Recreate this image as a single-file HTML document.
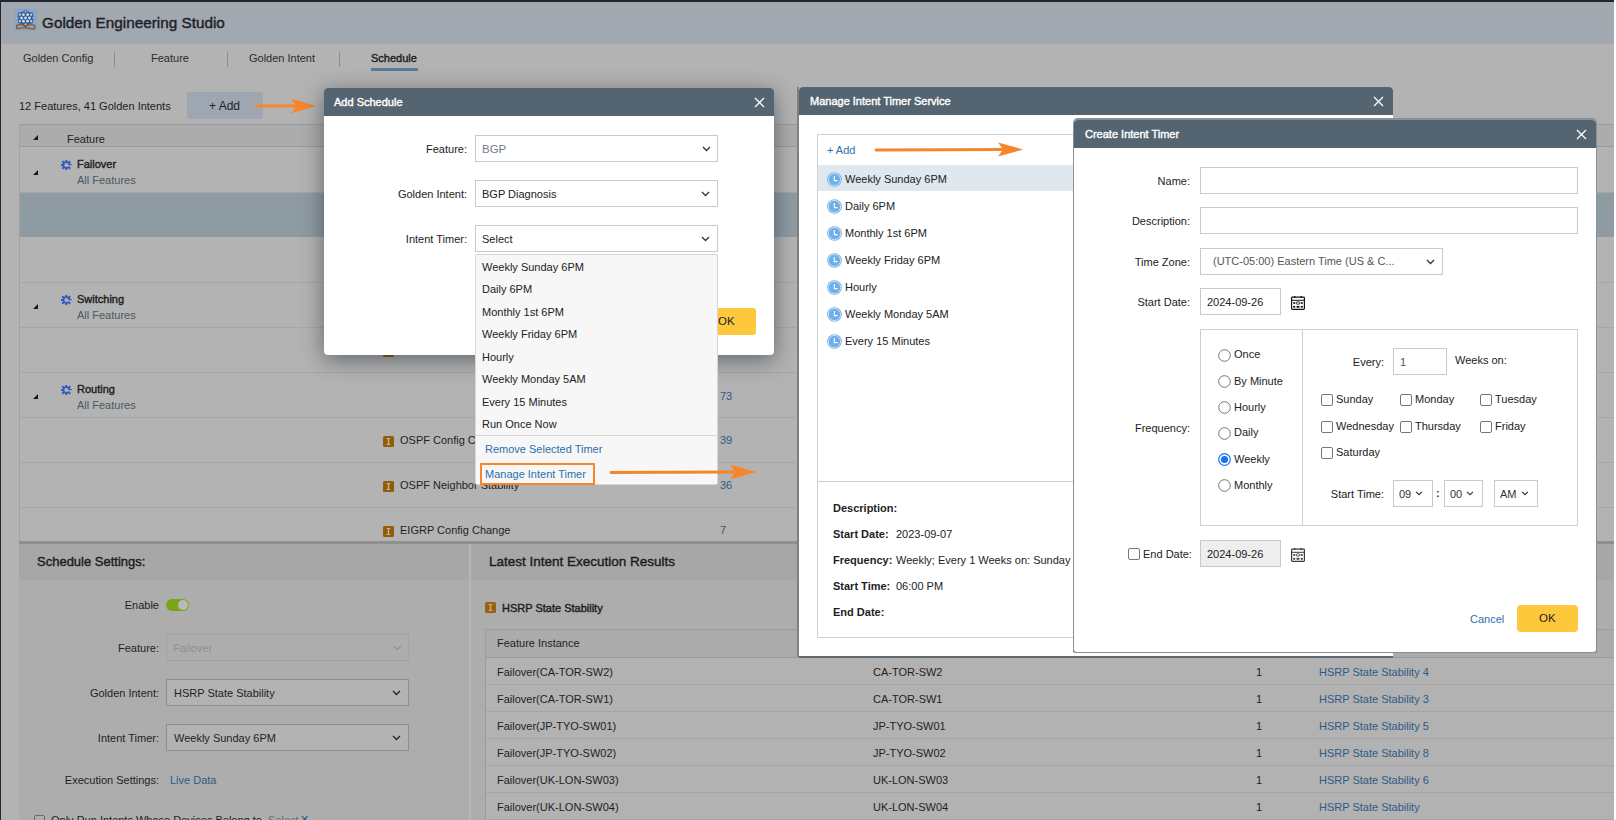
<!DOCTYPE html>
<html><head><meta charset="utf-8">
<style>
*{box-sizing:border-box;margin:0;padding:0}
html,body{width:1616px;height:820px;overflow:hidden;background:#fff}
body{position:relative;font-family:"Liberation Sans",sans-serif;font-size:11px;color:#222}
.a{position:absolute}
.t{position:absolute;white-space:nowrap;line-height:1}
.b{font-weight:bold}
.r{text-align:right}
.chev{position:absolute;width:9px;height:6px}
.sb{-webkit-text-stroke:0.4px currentColor}
</style></head><body>
<!-- page -->
<div class="a" style="left:0;top:0;width:1614px;height:820px;background:#b3b3b3;overflow:hidden">
  <div class="a" style="left:0;top:0;width:1614px;height:2px;background:#23272c"></div>
  <div class="a" style="left:0;top:0;width:1px;height:820px;background:#23272c"></div>
  <!-- header -->
  <div class="a" style="left:1px;top:2px;width:1613px;height:42px;background:#a1a8b0"></div>
  <svg class="a" style="left:15px;top:9px" width="22" height="22" viewBox="0 0 22 22">
    <rect x="0" y="0" width="22" height="22" rx="1.5" fill="#89a5c8"/>
    <polygon points="10.5,0.8 14,3.2 17.8,3.6 18.4,7.4 17,9 18.4,10.6 17.8,14.2 14,15 10.5,17.2 7,15 3.2,14.2 2.6,10.6 4,9 2.6,7.4 3.2,3.6 7,3.2" fill="#2462a8"/>
    <g fill="#ddd6cc">
      <circle cx="10.5" cy="2.6" r="0.9"/><circle cx="10.5" cy="15.2" r="0.9"/>
      <circle cx="4.8" cy="5.7" r="1.1"/><circle cx="8.4" cy="5.7" r="1.4"/><circle cx="12.6" cy="5.7" r="1.4"/><circle cx="16.2" cy="5.7" r="1.1"/>
      <circle cx="6.5" cy="9" r="1.4"/><circle cx="10.5" cy="9" r="1.4"/><circle cx="14.5" cy="9" r="1.4"/>
      <circle cx="4.8" cy="12.2" r="1.1"/><circle cx="8.4" cy="12.2" r="1.4"/><circle cx="12.6" cy="12.2" r="1.4"/><circle cx="16.2" cy="12.2" r="1.1"/>
    </g>
    <path d="M10.5 17.8 C8 15.5 4 15.5 1.8 16.2 L1.6 19.6 C4.5 19 8 19.2 10.5 18.6 C13 19.2 16.5 19.8 19.6 19.8 L19.8 16.5 C17 15.3 13 15.5 10.5 17.8 Z" fill="none" stroke="#9a5412" stroke-width="1.3" stroke-linejoin="round"/>
  </svg>
  <div class="t sb" style="left:42px;top:15px;font-size:15.3px;color:#1d2126">Golden Engineering Studio</div>
  <!-- tabs -->
  <div class="t" style="left:23px;top:53px;color:#2b2b2b">Golden Config</div>
  <div class="a" style="left:114px;top:52px;width:1px;height:15px;background:#8c8c8c"></div>
  <div class="t" style="left:151px;top:53px;color:#2b2b2b">Feature</div>
  <div class="a" style="left:227px;top:52px;width:1px;height:15px;background:#8c8c8c"></div>
  <div class="t" style="left:249px;top:53px;color:#2b2b2b">Golden Intent</div>
  <div class="a" style="left:339px;top:52px;width:1px;height:15px;background:#8c8c8c"></div>
  <div class="t sb" style="left:371px;top:53px;color:#1d1d1d">Schedule</div>
  <div class="a" style="left:371px;top:68px;width:47px;height:3px;background:#5b7b95"></div>
  <!-- toolbar -->
  <div class="t" style="left:19px;top:101px;color:#222">12 Features, 41 Golden Intents</div>
  <div class="a" style="left:187px;top:92px;width:76px;height:27px;background:#9ea6b1;border-radius:3px"></div>
  <div class="t" style="left:209px;top:100px;color:#222;font-size:12px">+ Add</div>

  <!-- table -->
  <div class="a" style="left:19px;top:124px;width:1595px;height:418px;border-left:1px solid #a0a0a0;border-top:1px solid #9c9c9c"></div>
  <div class="a" style="left:20px;top:125px;width:1594px;height:22px;background:#acacac;border-bottom:1px solid #999"></div>
  <div class="a" style="left:33px;top:135px;width:0;height:0;border-left:5px solid transparent;border-bottom:5px solid #1a1a1a"></div>
  <div class="t" style="left:67px;top:134px;color:#222">Feature</div>
  <!-- rows -->
  <div class="a" style="left:20px;top:192px;width:1594px;height:45px;background:#8f9ba2"></div>
  <div class="a" style="left:20px;top:192px;width:1594px;height:1px;background:#a6a6a6"></div>
  <div class="a" style="left:20px;top:282px;width:1594px;height:1px;background:#a6a6a6"></div>
  <div class="a" style="left:20px;top:327px;width:1594px;height:1px;background:#a6a6a6"></div>
  <div class="a" style="left:20px;top:372px;width:1594px;height:1px;background:#a6a6a6"></div>
  <div class="a" style="left:20px;top:417px;width:1594px;height:1px;background:#a6a6a6"></div>
  <div class="a" style="left:20px;top:462px;width:1594px;height:1px;background:#a6a6a6"></div>
  <div class="a" style="left:20px;top:507px;width:1594px;height:1px;background:#a6a6a6"></div>
  <div class="a" style="left:19px;top:541px;width:1595px;height:3px;background:#8f8f8f"></div>

  <!-- group rows -->
  <div class="a" style="left:33px;top:170px;width:0;height:0;border-left:5px solid transparent;border-bottom:5px solid #1a1a1a"></div>
  <svg class="a" style="left:61px;top:160px" width="11" height="10" viewBox="0 0 11 10"><g fill="none" stroke="#2f5cc0"><circle cx="5.3" cy="5" r="2.9" stroke-width="1.8"/></g><g fill="#2f5cc0"><rect x="4.2" y="0" width="2" height="2"/><rect x="4.2" y="8" width="2" height="2"/><rect x="0" y="4" width="2" height="2"/><rect x="8.5" y="4" width="2.3" height="2"/><rect x="1" y="1" width="2" height="2" transform="rotate(45 2 2)"/><rect x="7.5" y="1" width="2" height="2" transform="rotate(45 8.5 2)"/><rect x="1" y="7" width="2" height="2" transform="rotate(45 2 8)"/><rect x="7.5" y="7" width="2" height="2" transform="rotate(45 8.5 8)"/></g><rect x="6.5" y="5.2" width="4.5" height="1.3" fill="#b3b3b3"/></svg>
  <div class="t sb" style="left:77px;top:159px;color:#1e1e1e">Failover</div>
  <div class="t" style="left:77px;top:175px;color:#4c5863">All Features</div>

  <div class="a" style="left:33px;top:304px;width:0;height:0;border-left:5px solid transparent;border-bottom:5px solid #1a1a1a"></div>
  <svg class="a" style="left:61px;top:295px" width="11" height="10" viewBox="0 0 11 10"><g fill="none" stroke="#2f5cc0"><circle cx="5.3" cy="5" r="2.9" stroke-width="1.8"/></g><g fill="#2f5cc0"><rect x="4.2" y="0" width="2" height="2"/><rect x="4.2" y="8" width="2" height="2"/><rect x="0" y="4" width="2" height="2"/><rect x="8.5" y="4" width="2.3" height="2"/><rect x="1" y="1" width="2" height="2" transform="rotate(45 2 2)"/><rect x="7.5" y="1" width="2" height="2" transform="rotate(45 8.5 2)"/><rect x="1" y="7" width="2" height="2" transform="rotate(45 2 8)"/><rect x="7.5" y="7" width="2" height="2" transform="rotate(45 8.5 8)"/></g><rect x="6.5" y="5.2" width="4.5" height="1.3" fill="#b3b3b3"/></svg>
  <div class="t sb" style="left:77px;top:294px;color:#1e1e1e">Switching</div>
  <div class="t" style="left:77px;top:310px;color:#4c5863">All Features</div>

  <div class="a" style="left:33px;top:394px;width:0;height:0;border-left:5px solid transparent;border-bottom:5px solid #1a1a1a"></div>
  <svg class="a" style="left:61px;top:385px" width="11" height="10" viewBox="0 0 11 10"><g fill="none" stroke="#2f5cc0"><circle cx="5.3" cy="5" r="2.9" stroke-width="1.8"/></g><g fill="#2f5cc0"><rect x="4.2" y="0" width="2" height="2"/><rect x="4.2" y="8" width="2" height="2"/><rect x="0" y="4" width="2" height="2"/><rect x="8.5" y="4" width="2.3" height="2"/><rect x="1" y="1" width="2" height="2" transform="rotate(45 2 2)"/><rect x="7.5" y="1" width="2" height="2" transform="rotate(45 8.5 2)"/><rect x="1" y="7" width="2" height="2" transform="rotate(45 2 8)"/><rect x="7.5" y="7" width="2" height="2" transform="rotate(45 8.5 8)"/></g><rect x="6.5" y="5.2" width="4.5" height="1.3" fill="#b3b3b3"/></svg>
  <div class="t sb" style="left:77px;top:384px;color:#1e1e1e">Routing</div>
  <div class="t" style="left:77px;top:400px;color:#4c5863">All Features</div>

  <!-- intent rows -->
  <svg class="a" style="left:383px;top:346px" width="11" height="11" viewBox="0 0 11 11"><rect width="11" height="11" rx="1.5" fill="#935d08"/><path d="M3.7 2 H7.3 V3 H6.2 V8 H7.3 V9 H3.7 V8 H4.8 V3 H3.7 Z" fill="#b4b4b4"/></svg>
  <svg class="a" style="left:383px;top:436px" width="11" height="11" viewBox="0 0 11 11"><rect width="11" height="11" rx="1.5" fill="#935d08"/><path d="M3.7 2 H7.3 V3 H6.2 V8 H7.3 V9 H3.7 V8 H4.8 V3 H3.7 Z" fill="#b4b4b4"/></svg>
  <div class="t" style="left:400px;top:435px;color:#1f1f1f">OSPF Config Change</div>
  <div class="t" style="left:720px;top:391px;color:#2f5a84">73</div>
  <div class="t" style="left:720px;top:435px;color:#2f5a84">39</div>
  <svg class="a" style="left:383px;top:481px" width="11" height="11" viewBox="0 0 11 11"><rect width="11" height="11" rx="1.5" fill="#935d08"/><path d="M3.7 2 H7.3 V3 H6.2 V8 H7.3 V9 H3.7 V8 H4.8 V3 H3.7 Z" fill="#b4b4b4"/></svg>
  <div class="t" style="left:400px;top:480px;color:#1f1f1f">OSPF Neighbor Stability</div>
  <div class="t" style="left:720px;top:480px;color:#2f5a84">36</div>
  <svg class="a" style="left:383px;top:526px" width="11" height="11" viewBox="0 0 11 11"><rect width="11" height="11" rx="1.5" fill="#935d08"/><path d="M3.7 2 H7.3 V3 H6.2 V8 H7.3 V9 H3.7 V8 H4.8 V3 H3.7 Z" fill="#b4b4b4"/></svg>
  <div class="t" style="left:400px;top:525px;color:#1f1f1f">EIGRP Config Change</div>
  <div class="t" style="left:720px;top:525px;color:#2f5a84">7</div>

  <!-- bottom panels -->
  <div class="a" style="left:19px;top:544px;width:450px;height:276px;background:#adadad"></div>
  <div class="a" style="left:19px;top:544px;width:450px;height:36px;background:#a7a7a7"></div>
  <div class="a" style="left:469px;top:544px;width:2px;height:276px;background:#b6b6b6"></div>
  <div class="a" style="left:471px;top:544px;width:1143px;height:276px;background:#adadad"></div>
  <div class="a" style="left:471px;top:544px;width:1143px;height:36px;background:#a7a7a7"></div>
  <div class="t sb" style="left:37px;top:555px;font-size:13px;color:#1c1c1c">Schedule Settings:</div>
  <div class="t r" style="left:59px;width:100px;top:600px;color:#1f1f1f">Enable</div>
  <div class="a" style="left:166px;top:599px;width:23px;height:12px;border-radius:6px;background:#79a51c"></div>
  <div class="a" style="left:178px;top:600px;width:10px;height:10px;border-radius:5px;background:#b9b9b9"></div>
  <div class="t r" style="left:59px;width:100px;top:643px;color:#1f1f1f">Feature:</div>
  <div class="a" style="left:166px;top:634px;width:243px;height:27px;border:1px solid #a3a3a3;background:#adadad"></div>
  <div class="t" style="left:173px;top:643px;color:#8f8f8f">Failover</div>
  <svg class="chev" style="left:393px;top:645px" viewBox="0 0 9 6"><path d="M1 1 L4.5 4.5 L8 1" fill="none" stroke="#8f8f8f" stroke-width="1.2"/></svg>
  <div class="t r" style="left:39px;width:120px;top:688px;color:#1f1f1f">Golden Intent:</div>
  <div class="a" style="left:166px;top:679px;width:243px;height:27px;border:1px solid #8e8e8e;background:#b3b3b3"></div>
  <div class="t" style="left:174px;top:688px;color:#1f1f1f">HSRP State Stability</div>
  <svg class="chev" style="left:392px;top:690px" viewBox="0 0 9 6"><path d="M1 1 L4.5 4.5 L8 1" fill="none" stroke="#222" stroke-width="1.3"/></svg>
  <div class="t r" style="left:39px;width:120px;top:733px;color:#1f1f1f">Intent Timer:</div>
  <div class="a" style="left:166px;top:724px;width:243px;height:27px;border:1px solid #8e8e8e;background:#b3b3b3"></div>
  <div class="t" style="left:174px;top:733px;color:#1f1f1f">Weekly Sunday 6PM</div>
  <svg class="chev" style="left:392px;top:735px" viewBox="0 0 9 6"><path d="M1 1 L4.5 4.5 L8 1" fill="none" stroke="#222" stroke-width="1.3"/></svg>
  <div class="t r" style="left:19px;width:140px;top:775px;color:#1f1f1f">Execution Settings:</div>
  <div class="t" style="left:170px;top:775px;color:#2f5a84">Live Data</div>
  <div class="a" style="left:34px;top:815px;width:11px;height:11px;border:1px solid #6a6a6a;border-radius:2px"></div>
  <div class="t" style="left:51px;top:815px;color:#1f1f1f">Only Run Intents Whose Devices Belong to</div>
  <div class="t" style="left:268px;top:815px;color:#6c6c6c">Select</div>
  <div class="t" style="left:300px;top:814px;color:#2f5a84">&#x2715;</div>

  <!-- results -->
  <svg class="a" style="left:485px;top:602px" width="11" height="11" viewBox="0 0 11 11"><rect width="11" height="11" rx="1.5" fill="#9a620a"/><path d="M3.7 2 H7.3 V3 H6.2 V8 H7.3 V9 H3.7 V8 H4.8 V3 H3.7 Z" fill="#b0b0b0"/></svg>
  <div class="t sb" style="left:502px;top:603px;color:#1c1c1c">HSRP State Stability</div>
  <div class="a" style="left:485px;top:629px;width:1129px;height:191px;border-left:1px solid #9c9c9c;border-top:1px solid #9c9c9c;background:#b2b2b2"></div>
  <div class="a" style="left:486px;top:630px;width:1128px;height:28px;background:#ababab;border-bottom:1px solid #9c9c9c"></div>
  <div class="t" style="left:497px;top:638px;color:#1f1f1f">Feature Instance</div>
  <div class="a" style="left:486px;top:684px;width:1128px;height:1px;background:#a4a4a4"></div>
  <div class="t" style="left:497px;top:667px;color:#1f1f1f">Failover(CA-TOR-SW2)</div>
  <div class="t" style="left:873px;top:667px;color:#1f1f1f">CA-TOR-SW2</div>
  <div class="t" style="left:1256px;top:667px;color:#1f1f1f">1</div>
  <div class="t" style="left:1319px;top:667px;color:#2f5a84">HSRP State Stability 4</div>
  <div class="a" style="left:486px;top:711px;width:1128px;height:1px;background:#a4a4a4"></div>
  <div class="t" style="left:497px;top:694px;color:#1f1f1f">Failover(CA-TOR-SW1)</div>
  <div class="t" style="left:873px;top:694px;color:#1f1f1f">CA-TOR-SW1</div>
  <div class="t" style="left:1256px;top:694px;color:#1f1f1f">1</div>
  <div class="t" style="left:1319px;top:694px;color:#2f5a84">HSRP State Stability 3</div>
  <div class="a" style="left:486px;top:738px;width:1128px;height:1px;background:#a4a4a4"></div>
  <div class="t" style="left:497px;top:721px;color:#1f1f1f">Failover(JP-TYO-SW01)</div>
  <div class="t" style="left:873px;top:721px;color:#1f1f1f">JP-TYO-SW01</div>
  <div class="t" style="left:1256px;top:721px;color:#1f1f1f">1</div>
  <div class="t" style="left:1319px;top:721px;color:#2f5a84">HSRP State Stability 5</div>
  <div class="a" style="left:486px;top:765px;width:1128px;height:1px;background:#a4a4a4"></div>
  <div class="t" style="left:497px;top:748px;color:#1f1f1f">Failover(JP-TYO-SW02)</div>
  <div class="t" style="left:873px;top:748px;color:#1f1f1f">JP-TYO-SW02</div>
  <div class="t" style="left:1256px;top:748px;color:#1f1f1f">1</div>
  <div class="t" style="left:1319px;top:748px;color:#2f5a84">HSRP State Stability 8</div>
  <div class="a" style="left:486px;top:792px;width:1128px;height:1px;background:#a4a4a4"></div>
  <div class="t" style="left:497px;top:775px;color:#1f1f1f">Failover(UK-LON-SW03)</div>
  <div class="t" style="left:873px;top:775px;color:#1f1f1f">UK-LON-SW03</div>
  <div class="t" style="left:1256px;top:775px;color:#1f1f1f">1</div>
  <div class="t" style="left:1319px;top:775px;color:#2f5a84">HSRP State Stability 6</div>
  <div class="a" style="left:486px;top:819px;width:1128px;height:1px;background:#a4a4a4"></div>
  <div class="t" style="left:497px;top:802px;color:#1f1f1f">Failover(UK-LON-SW04)</div>
  <div class="t" style="left:873px;top:802px;color:#1f1f1f">UK-LON-SW04</div>
  <div class="t" style="left:1256px;top:802px;color:#1f1f1f">1</div>
  <div class="t" style="left:1319px;top:802px;color:#2f5a84">HSRP State Stability</div>
  <div class="t sb" style="left:489px;top:555px;font-size:13.5px;color:#1c1c1c">Latest Intent Execution Results</div>
</div>
<!-- MODALS -->
<!-- orange arrow 1 -->
<svg class="a" style="left:255px;top:97px" width="62" height="18" viewBox="0 0 62 18"><path d="M1 9 L40 9" stroke="#f7862b" stroke-width="3" stroke-linecap="round"/><path d="M36 1.5 L61 9 L36 16.5 L41 9 Z" fill="#f7862b"/></svg>

<!-- Add Schedule modal -->
<div class="a" style="left:324px;top:88px;width:450px;height:267px;background:#fff;border-radius:4px;box-shadow:0 5px 22px rgba(15,25,35,0.5)"></div>
<div class="a" style="left:324px;top:88px;width:450px;height:28px;background:#546471;border-radius:4px 4px 0 0"></div>
<div class="t sb" style="left:334px;top:97px;color:#fff">Add Schedule</div>
<svg class="a" style="left:754px;top:97px" width="11" height="11" viewBox="0 0 11 11"><path d="M1 1 L10 10 M10 1 L1 10" stroke="#fff" stroke-width="1.3"/></svg>
<div class="t r" style="left:367px;width:100px;top:144px;color:#222">Feature:</div>
<div class="a" style="left:475px;top:135px;width:243px;height:27px;border:1px solid #c9c9c9;background:#fff"></div>
<div class="t" style="left:482px;top:144px;color:#6f7d89;font-size:11.5px">BGP</div>
<svg class="chev" style="left:702px;top:146px" viewBox="0 0 9 6"><path d="M1 1 L4.5 4.5 L8 1" fill="none" stroke="#333" stroke-width="1.3"/></svg>
<div class="t r" style="left:347px;width:120px;top:189px;color:#222">Golden Intent:</div>
<div class="a" style="left:475px;top:180px;width:243px;height:27px;border:1px solid #c9c9c9;background:#fff"></div>
<div class="t" style="left:482px;top:189px;color:#222">BGP Diagnosis</div>
<svg class="chev" style="left:701px;top:191px" viewBox="0 0 9 6"><path d="M1 1 L4.5 4.5 L8 1" fill="none" stroke="#333" stroke-width="1.3"/></svg>
<div class="t r" style="left:347px;width:120px;top:234px;color:#222">Intent Timer:</div>
<div class="a" style="left:475px;top:225px;width:243px;height:27px;border:1px solid #c9c9c9;background:#fff"></div>
<div class="t" style="left:482px;top:234px;color:#222">Select</div>
<svg class="chev" style="left:701px;top:236px" viewBox="0 0 9 6"><path d="M1 1 L4.5 4.5 L8 1" fill="none" stroke="#333" stroke-width="1.3"/></svg>
<div class="a" style="left:697px;top:308px;width:59px;height:27px;background:#fec83c;border-radius:3px"></div>
<div class="t" style="left:718px;top:316px;color:#222;font-size:11.5px">OK</div>
<!-- dropdown -->
<div class="a" style="left:475px;top:254px;width:243px;height:231px;background:#f7f7f7;border:1px solid #d6d6d6;border-radius:2px"></div>
<div class="t" style="left:482px;top:262px;color:#222">Weekly Sunday 6PM</div>
<div class="t" style="left:482px;top:284px;color:#222">Daily 6PM</div>
<div class="t" style="left:482px;top:307px;color:#222">Monthly 1st 6PM</div>
<div class="t" style="left:482px;top:329px;color:#222">Weekly Friday 6PM</div>
<div class="t" style="left:482px;top:352px;color:#222">Hourly</div>
<div class="t" style="left:482px;top:374px;color:#222">Weekly Monday 5AM</div>
<div class="t" style="left:482px;top:397px;color:#222">Every 15 Minutes</div>
<div class="t" style="left:482px;top:419px;color:#222">Run Once Now</div>
<div class="a" style="left:476px;top:435px;width:241px;height:1px;background:#d6d6d6"></div>
<div class="t" style="left:485px;top:444px;color:#2c6fad">Remove Selected Timer</div>
<div class="t" style="left:485px;top:469px;color:#2c6fad">Manage Intent Timer</div>
<div class="a" style="left:480px;top:463px;width:115px;height:22px;border:2px solid #f7862b"></div>
<svg class="a" style="left:609px;top:463px" width="148" height="18" viewBox="0 0 148 18"><path d="M2 9.5 L125 9" stroke="#f7862b" stroke-width="3" stroke-linecap="round"/><path d="M121 1.5 L147 9 L121 16.5 L126 9 Z" fill="#f7862b"/></svg>

<!-- Manage modal -->
<div class="a" style="left:797px;top:87px;width:2px;height:570px;background:#7f7f7f"></div>
<div class="a" style="left:799px;top:87px;width:594px;height:570px;background:#fff;border-radius:4px 4px 0 0"></div>
<div class="a" style="left:799px;top:656px;width:594px;height:2px;background:#5f6a72"></div>
<div class="a" style="left:799px;top:87px;width:594px;height:28px;background:#546471;border-radius:4px 4px 0 0"></div>
<div class="t sb" style="left:810px;top:96px;color:#fff">Manage Intent Timer Service</div>
<svg class="a" style="left:1373px;top:96px" width="11" height="11" viewBox="0 0 11 11"><path d="M1 1 L10 10 M10 1 L1 10" stroke="#fff" stroke-width="1.3"/></svg>
<div class="a" style="left:817px;top:134px;width:560px;height:504px;border:1px solid #cfcfcf"></div>
<div class="a" style="left:818px;top:481px;width:558px;height:1px;background:#cfcfcf"></div>
<div class="t" style="left:827px;top:145px;color:#2c6fad">+ Add</div>
<svg class="a" style="left:874px;top:141px" width="150" height="18" viewBox="0 0 150 18"><path d="M2 9 L128 8.5" stroke="#f7862b" stroke-width="3" stroke-linecap="round"/><path d="M124 1.5 L149 8.5 L124 15.5 L129 8.5 Z" fill="#f7862b"/></svg>
<div class="a" style="left:818px;top:165px;width:558px;height:26px;background:#dfe8ef"></div>
<svg class="a" style="left:827px;top:172px" width="15" height="15" viewBox="0 0 15 15"><circle cx="7.5" cy="7.5" r="7.3" fill="#6eaee8"/><circle cx="7.5" cy="7.5" r="6.1" fill="none" stroke="#e3f0fb" stroke-width="0.8"/><path d="M7.3 4 V8.6 H10.6" fill="none" stroke="#fff" stroke-width="1.1"/></svg>
<div class="t" style="left:845px;top:174px;color:#222">Weekly Sunday 6PM</div>
<svg class="a" style="left:827px;top:199px" width="15" height="15" viewBox="0 0 15 15"><circle cx="7.5" cy="7.5" r="7.3" fill="#6eaee8"/><circle cx="7.5" cy="7.5" r="6.1" fill="none" stroke="#e3f0fb" stroke-width="0.8"/><path d="M7.3 4 V8.6 H10.6" fill="none" stroke="#fff" stroke-width="1.1"/></svg>
<div class="t" style="left:845px;top:201px;color:#222">Daily 6PM</div>
<svg class="a" style="left:827px;top:226px" width="15" height="15" viewBox="0 0 15 15"><circle cx="7.5" cy="7.5" r="7.3" fill="#6eaee8"/><circle cx="7.5" cy="7.5" r="6.1" fill="none" stroke="#e3f0fb" stroke-width="0.8"/><path d="M7.3 4 V8.6 H10.6" fill="none" stroke="#fff" stroke-width="1.1"/></svg>
<div class="t" style="left:845px;top:228px;color:#222">Monthly 1st 6PM</div>
<svg class="a" style="left:827px;top:253px" width="15" height="15" viewBox="0 0 15 15"><circle cx="7.5" cy="7.5" r="7.3" fill="#6eaee8"/><circle cx="7.5" cy="7.5" r="6.1" fill="none" stroke="#e3f0fb" stroke-width="0.8"/><path d="M7.3 4 V8.6 H10.6" fill="none" stroke="#fff" stroke-width="1.1"/></svg>
<div class="t" style="left:845px;top:255px;color:#222">Weekly Friday 6PM</div>
<svg class="a" style="left:827px;top:280px" width="15" height="15" viewBox="0 0 15 15"><circle cx="7.5" cy="7.5" r="7.3" fill="#6eaee8"/><circle cx="7.5" cy="7.5" r="6.1" fill="none" stroke="#e3f0fb" stroke-width="0.8"/><path d="M7.3 4 V8.6 H10.6" fill="none" stroke="#fff" stroke-width="1.1"/></svg>
<div class="t" style="left:845px;top:282px;color:#222">Hourly</div>
<svg class="a" style="left:827px;top:307px" width="15" height="15" viewBox="0 0 15 15"><circle cx="7.5" cy="7.5" r="7.3" fill="#6eaee8"/><circle cx="7.5" cy="7.5" r="6.1" fill="none" stroke="#e3f0fb" stroke-width="0.8"/><path d="M7.3 4 V8.6 H10.6" fill="none" stroke="#fff" stroke-width="1.1"/></svg>
<div class="t" style="left:845px;top:309px;color:#222">Weekly Monday 5AM</div>
<svg class="a" style="left:827px;top:334px" width="15" height="15" viewBox="0 0 15 15"><circle cx="7.5" cy="7.5" r="7.3" fill="#6eaee8"/><circle cx="7.5" cy="7.5" r="6.1" fill="none" stroke="#e3f0fb" stroke-width="0.8"/><path d="M7.3 4 V8.6 H10.6" fill="none" stroke="#fff" stroke-width="1.1"/></svg>
<div class="t" style="left:845px;top:336px;color:#222">Every 15 Minutes</div>
<div class="t b" style="left:833px;top:503px;color:#1e1e1e">Description:</div>
<div class="t b" style="left:833px;top:529px;color:#1e1e1e">Start Date:</div>
<div class="t" style="left:896px;top:529px;color:#222">2023-09-07</div>
<div class="t b" style="left:833px;top:555px;color:#1e1e1e">Frequency:</div>
<div class="t" style="left:896px;top:555px;color:#222">Weekly; Every 1 Weeks on: Sunday</div>
<div class="t b" style="left:833px;top:581px;color:#1e1e1e">Start Time:</div>
<div class="t" style="left:896px;top:581px;color:#222">06:00 PM</div>
<div class="t b" style="left:833px;top:607px;color:#1e1e1e">End Date:</div>

<!-- Create modal -->
<div class="a" style="left:1073px;top:118px;width:524px;height:535px;background:#86919a;border-radius:5px 5px 2px 2px"></div>
<div class="a" style="left:1074px;top:120px;width:522px;height:532px;background:#fff;border-radius:4px 4px 3px 3px"></div>
<div class="a" style="left:1074px;top:120px;width:522px;height:28px;background:#546471;border-radius:4px 4px 0 0"></div>
<div class="t sb" style="left:1085px;top:129px;color:#fff">Create Intent Timer</div>
<svg class="a" style="left:1576px;top:129px" width="11" height="11" viewBox="0 0 11 11"><path d="M1 1 L10 10 M10 1 L1 10" stroke="#fff" stroke-width="1.3"/></svg>

<div class="t r" style="left:1070px;width:120px;top:176px;color:#222">Name:</div>
<div class="a" style="left:1200px;top:167px;width:378px;height:27px;border:1px solid #c9c9c9"></div>
<div class="t r" style="left:1070px;width:120px;top:216px;color:#222">Description:</div>
<div class="a" style="left:1200px;top:207px;width:378px;height:27px;border:1px solid #c9c9c9"></div>
<div class="t r" style="left:1070px;width:120px;top:257px;color:#222">Time Zone:</div>
<div class="a" style="left:1200px;top:248px;width:243px;height:27px;border:1px solid #c9c9c9"></div>
<div class="t" style="left:1213px;top:256px;color:#555">(UTC-05:00) Eastern Time (US &amp; C...</div>
<svg class="chev" style="left:1426px;top:259px" viewBox="0 0 9 6"><path d="M1 1 L4.5 4.5 L8 1" fill="none" stroke="#333" stroke-width="1.3"/></svg>
<div class="t r" style="left:1070px;width:120px;top:297px;color:#222">Start Date:</div>
<div class="a" style="left:1200px;top:288px;width:81px;height:27px;border:1px solid #c9c9c9"></div>
<div class="t" style="left:1207px;top:297px;color:#222">2024-09-26</div>
<svg class="a cal" style="left:1291px;top:296px" width="14" height="14" viewBox="0 0 14 14"><rect x="0.6" y="1.2" width="12.8" height="12.2" rx="0.8" fill="none" stroke="#151515" stroke-width="1.2"/><path d="M0.6 4.3 H13.4" stroke="#151515" stroke-width="1"/><circle cx="3.8" cy="0.9" r="0.9" fill="#151515"/><circle cx="10.2" cy="0.9" r="0.9" fill="#151515"/><g fill="#151515"><rect x="2.2" y="6.2" width="2" height="1.6"/><rect x="9.8" y="6.2" width="2" height="1.6"/><rect x="2.2" y="9.9" width="2" height="1.8"/><rect x="5.5" y="9.9" width="3" height="1.8"/><rect x="9.8" y="9.9" width="2" height="1.8"/></g><rect x="5.2" y="5.9" width="3.6" height="2.2" rx="1" fill="none" stroke="#151515" stroke-width="0.9"/></svg>

<div class="t r" style="left:1070px;width:120px;top:423px;color:#222">Frequency:</div>
<div class="a" style="left:1200px;top:329px;width:378px;height:197px;border:1px solid #cfcfcf"></div>
<div class="a" style="left:1302px;top:330px;width:1px;height:195px;background:#cfcfcf"></div>
<svg class="a" style="left:1218px;top:349px" width="13" height="13" viewBox="0 0 13 13"><circle cx="6.5" cy="6.5" r="5.8" fill="#fff" stroke="#767676" stroke-width="1"/></svg>
<div class="t" style="left:1234px;top:349px;color:#222">Once</div>
<svg class="a" style="left:1218px;top:375px" width="13" height="13" viewBox="0 0 13 13"><circle cx="6.5" cy="6.5" r="5.8" fill="#fff" stroke="#767676" stroke-width="1"/></svg>
<div class="t" style="left:1234px;top:376px;color:#222">By Minute</div>
<svg class="a" style="left:1218px;top:401px" width="13" height="13" viewBox="0 0 13 13"><circle cx="6.5" cy="6.5" r="5.8" fill="#fff" stroke="#767676" stroke-width="1"/></svg>
<div class="t" style="left:1234px;top:402px;color:#222">Hourly</div>
<svg class="a" style="left:1218px;top:427px" width="13" height="13" viewBox="0 0 13 13"><circle cx="6.5" cy="6.5" r="5.8" fill="#fff" stroke="#767676" stroke-width="1"/></svg>
<div class="t" style="left:1234px;top:427px;color:#222">Daily</div>
<svg class="a" style="left:1218px;top:453px" width="13" height="13" viewBox="0 0 13 13"><circle cx="6.5" cy="6.5" r="5.8" fill="#fff" stroke="#1a73e8" stroke-width="1.2"/><circle cx="6.5" cy="6.5" r="3.6" fill="#1a73e8"/></svg>
<div class="t" style="left:1234px;top:454px;color:#222">Weekly</div>
<svg class="a" style="left:1218px;top:479px" width="13" height="13" viewBox="0 0 13 13"><circle cx="6.5" cy="6.5" r="5.8" fill="#fff" stroke="#767676" stroke-width="1"/></svg>
<div class="t" style="left:1234px;top:480px;color:#222">Monthly</div>
<div class="t r" style="left:1304px;width:80px;top:357px;color:#222">Every:</div>
<div class="a" style="left:1393px;top:348px;width:54px;height:27px;border:1px solid #c9c9c9"></div>
<div class="t" style="left:1400px;top:357px;color:#555">1</div>
<div class="t" style="left:1455px;top:355px;color:#222">Weeks on:</div>
<div class="a" style="left:1321px;top:394px;width:12px;height:12px;border:1px solid #777;border-radius:2px"></div>
<div class="t" style="left:1336px;top:394px;color:#222">Sunday</div>
<div class="a" style="left:1400px;top:394px;width:12px;height:12px;border:1px solid #777;border-radius:2px"></div>
<div class="t" style="left:1415px;top:394px;color:#222">Monday</div>
<div class="a" style="left:1480px;top:394px;width:12px;height:12px;border:1px solid #777;border-radius:2px"></div>
<div class="t" style="left:1495px;top:394px;color:#222">Tuesday</div>
<div class="a" style="left:1321px;top:421px;width:12px;height:12px;border:1px solid #777;border-radius:2px"></div>
<div class="t" style="left:1336px;top:421px;color:#222">Wednesday</div>
<div class="a" style="left:1400px;top:421px;width:12px;height:12px;border:1px solid #777;border-radius:2px"></div>
<div class="t" style="left:1415px;top:421px;color:#222">Thursday</div>
<div class="a" style="left:1480px;top:421px;width:12px;height:12px;border:1px solid #777;border-radius:2px"></div>
<div class="t" style="left:1495px;top:421px;color:#222">Friday</div>
<div class="a" style="left:1321px;top:447px;width:12px;height:12px;border:1px solid #777;border-radius:2px"></div>
<div class="t" style="left:1336px;top:447px;color:#222">Saturday</div>
<div class="t r" style="left:1304px;width:80px;top:489px;color:#222">Start Time:</div>
<div class="a" style="left:1393px;top:480px;width:40px;height:27px;border:1px solid #c9c9c9"></div>
<div class="t" style="left:1399px;top:489px;color:#333">09</div>
<svg class="chev" style="left:1415px;top:491px;width:8px;height:5px" viewBox="0 0 9 6"><path d="M1 1 L4.5 4.5 L8 1" fill="none" stroke="#333" stroke-width="1.3"/></svg>
<div class="t b" style="left:1436px;top:488px;color:#333">:</div>
<div class="a" style="left:1444px;top:480px;width:39px;height:27px;border:1px solid #c9c9c9"></div>
<div class="t" style="left:1450px;top:489px;color:#333">00</div>
<svg class="chev" style="left:1466px;top:491px;width:8px;height:5px" viewBox="0 0 9 6"><path d="M1 1 L4.5 4.5 L8 1" fill="none" stroke="#333" stroke-width="1.3"/></svg>
<div class="a" style="left:1494px;top:480px;width:44px;height:27px;border:1px solid #c9c9c9"></div>
<div class="t" style="left:1500px;top:489px;color:#333">AM</div>
<svg class="chev" style="left:1521px;top:491px;width:8px;height:5px" viewBox="0 0 9 6"><path d="M1 1 L4.5 4.5 L8 1" fill="none" stroke="#333" stroke-width="1.3"/></svg>

<div class="a" style="left:1128px;top:548px;width:12px;height:12px;border:1px solid #777;border-radius:2px"></div>
<div class="t" style="left:1143px;top:549px;color:#222">End Date:</div>
<div class="a" style="left:1200px;top:540px;width:81px;height:27px;border:1px solid #c9c9c9;background:#eee"></div>
<div class="t" style="left:1207px;top:549px;color:#222">2024-09-26</div>
<svg class="a cal" style="left:1291px;top:548px" width="14" height="14" viewBox="0 0 14 14"><rect x="0.6" y="1.2" width="12.8" height="12.2" rx="0.8" fill="none" stroke="#3a3a3a" stroke-width="1.2"/><path d="M0.6 4.3 H13.4" stroke="#3a3a3a" stroke-width="1"/><circle cx="3.8" cy="0.9" r="0.9" fill="#3a3a3a"/><circle cx="10.2" cy="0.9" r="0.9" fill="#3a3a3a"/><g fill="#3a3a3a"><rect x="2.2" y="6.2" width="2" height="1.6"/><rect x="9.8" y="6.2" width="2" height="1.6"/><rect x="2.2" y="9.9" width="2" height="1.8"/><rect x="5.5" y="9.9" width="3" height="1.8"/><rect x="9.8" y="9.9" width="2" height="1.8"/></g><rect x="5.2" y="5.9" width="3.6" height="2.2" rx="1" fill="none" stroke="#3a3a3a" stroke-width="0.9"/></svg>

<div class="t" style="left:1470px;top:614px;color:#2c6fad">Cancel</div>
<div class="a" style="left:1517px;top:605px;width:61px;height:27px;background:#fec83c;border-radius:4px"></div>
<div class="t" style="left:1539px;top:613px;color:#222;font-size:11.5px">OK</div>
</body></html>
